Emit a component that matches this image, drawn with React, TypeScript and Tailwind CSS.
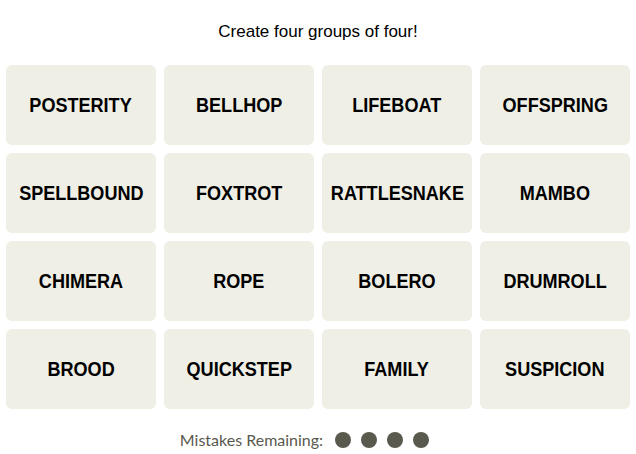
const words = [
  'POSTERITY', 'BELLHOP', 'LIFEBOAT', 'OFFSPRING',
  'SPELLBOUND', 'FOXTROT', 'RATTLESNAKE', 'MAMBO',
  'CHIMERA', 'ROPE', 'BOLERO', 'DRUMROLL',
  'BROOD', 'QUICKSTEP', 'FAMILY', 'SUSPICION',
];

export default function App() {
  return (
    <div className="w-[636px] h-[454px] bg-white px-[6px] pt-[20px]">
      <p className="text-center text-[17px] leading-[24px] text-black font-['Liberation_Sans',sans-serif]">
        Create four groups of four!
      </p>

      <div className="mt-[21px] grid grid-cols-4 gap-[8px]">
        {words.map((w) => (
          <button
            key={w}
            className="h-[80px] rounded-[6px] bg-[#efefe6] flex items-center justify-center text-[21px] font-bold text-black font-['Liberation_Sans',sans-serif]"
          >
            <span className="inline-block scale-x-[0.86] whitespace-nowrap">{w}</span>
          </button>
        ))}
      </div>

      <div className="mt-[19px] flex items-center justify-center gap-[12px] h-[24px] pr-[27px]">
        <span className="text-[16px] text-[#5a594e] font-['Lato',sans-serif]">Mistakes Remaining:</span>
        <div className="flex gap-[10px]">
          {[0, 1, 2, 3].map((i) => (
            <span key={i} className="w-[16px] h-[16px] rounded-full bg-[#5a594e]" />
          ))}
        </div>
      </div>
    </div>
  );
}
